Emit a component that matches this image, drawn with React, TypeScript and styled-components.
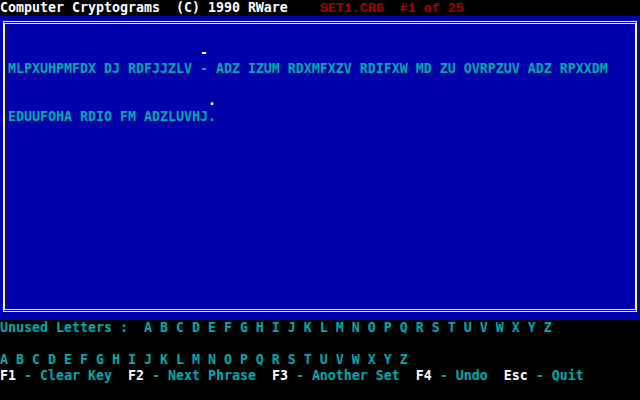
import React from "react";
import styled, { createGlobalStyle } from "styled-components";

const C = {
  black: "#000000",
  blue: "#0000AA",
  cyan: "#00AAAA",
  red: "#AA0000",
  white: "#FFFFFF",
  yellow: "#FFFF55",
};

const GlobalStyle = createGlobalStyle`
  html, body {
    margin: 0;
    padding: 0;
    background: ${C.black};
    overflow: hidden;
  }
`;

const Screen = styled.div`
  width: 640px;
  height: 400px;
  background: ${C.black};
  font-family: "DejaVu Sans Mono", "Liberation Mono", monospace;
  font-weight: bold;
  font-size: 13.29px;
  line-height: 16px;
  display: flex;
  flex-direction: column;
  overflow: hidden;
`;

const Row = styled.div<{ $color?: string }>`
  height: 16px;
  white-space: pre;
  color: ${(p) => p.$color ?? C.cyan};
`;

const Txt = styled.span<{ $color: string }>`
  color: ${(p) => p.$color};
`;

const SetInfo = styled.span`
  color: ${C.red};
  font-family: "Liberation Mono", "DejaVu Sans Mono", monospace;
  font-size: 13.33px;
`;

const BluePanel = styled.div`
  background: ${C.blue};
  height: 304px;
  box-sizing: border-box;
  padding: 5px 3px 8px 3px;
`;

const Frame = styled.div`
  height: 100%;
  box-sizing: border-box;
  border-top: 3px double ${C.yellow};
  border-bottom: 3px double ${C.yellow};
  border-left: 2px solid ${C.yellow};
  border-right: 2px solid ${C.yellow};
  padding: 21px 0 0 3px;
  display: flex;
  flex-direction: column;
`;

const Spacer = styled.div`
  height: 16px;
`;

const Status = styled.div`
  display: flex;
  flex-direction: column;
`;

const lines = [
  {
    guess: "                        -",
    cipher:
      "MLPXUHPMFDX DJ RDFJJZLV - ADZ IZUM RDXMFXZV RDIFXW MD ZU OVRPZUV ADZ RPXXDM",
  },
  {
    guess: "                         .",
    cipher: "EDUUFOHA RDIO FM ADZLUVHJ.",
  },
];

const keys = [
  ["F1", "Clear Key"],
  ["F2", "Next Phrase"],
  ["F3", "Another Set"],
  ["F4", "Undo"],
  ["Esc", "Quit"],
];

const alphabet = "ABCDEFGHIJKLMNOPQRSTUVWXYZ".split("").join(" ");

export default function App() {
  return (
    <>
      <GlobalStyle />
      <Screen>
        <Row>
          <Txt $color={C.white}>{"Computer Cryptograms  (C) 1990 RWare    "}</Txt>
          <SetInfo>{"SET1.CRG  #1 of 25"}</SetInfo>
        </Row>
        <BluePanel>
          <Frame>
            {lines.map((l, i) => (
              <React.Fragment key={i}>
                {i > 0 && <Spacer />}
                <Row $color={C.white}>{l.guess}</Row>
                <Row $color={C.cyan}>{l.cipher}</Row>
              </React.Fragment>
            ))}
          </Frame>
        </BluePanel>
        <Status>
          <Row $color={C.cyan}>{"Unused Letters :  " + alphabet}</Row>
          <Spacer />
          <Row $color={C.cyan}>{alphabet}</Row>
          <Row>
            {keys.map(([k, label], i) => (
              <React.Fragment key={k}>
                <Txt $color={C.white}>{k}</Txt>
                <Txt $color={C.cyan}>{" - " + label + (i < keys.length - 1 ? "  " : "")}</Txt>
              </React.Fragment>
            ))}
          </Row>
        </Status>
      </Screen>
    </>
  );
}
